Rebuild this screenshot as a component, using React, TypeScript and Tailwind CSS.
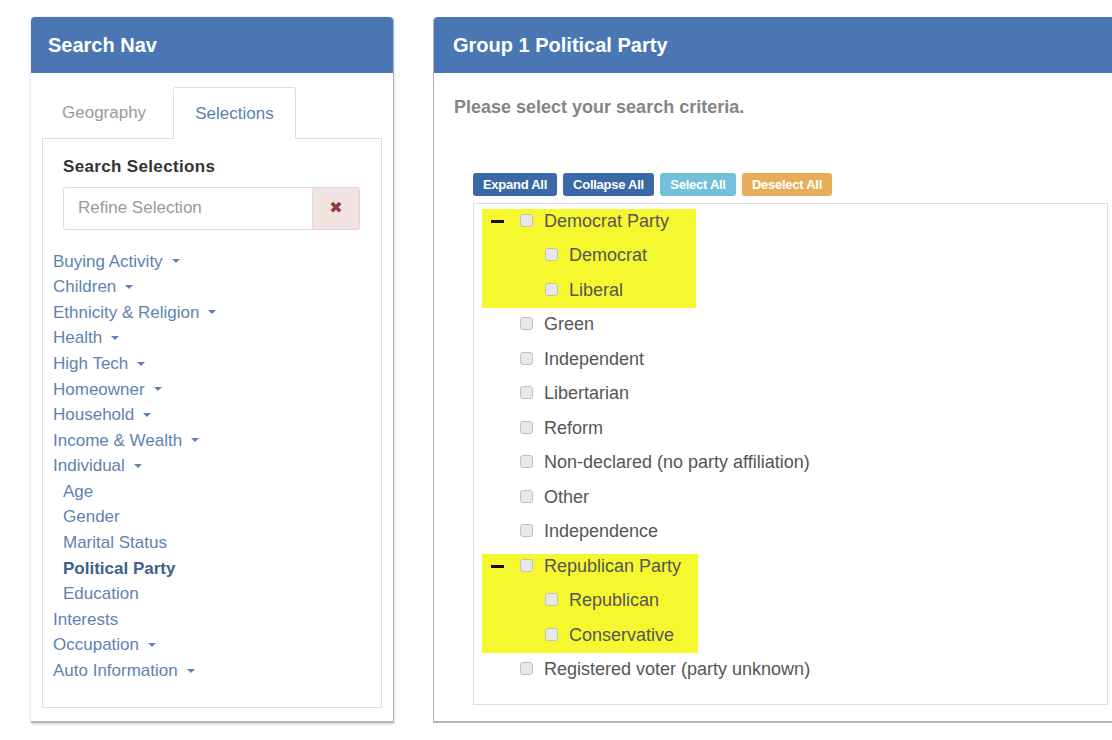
const NAV_ITEMS: { label: string; caret?: boolean; sub?: boolean; active?: boolean }[] = [
  { label: 'Buying Activity', caret: true },
  { label: 'Children', caret: true },
  { label: 'Ethnicity & Religion', caret: true },
  { label: 'Health', caret: true },
  { label: 'High Tech', caret: true },
  { label: 'Homeowner', caret: true },
  { label: 'Household', caret: true },
  { label: 'Income & Wealth', caret: true },
  { label: 'Individual', caret: true },
  { label: 'Age', sub: true },
  { label: 'Gender', sub: true },
  { label: 'Marital Status', sub: true },
  { label: 'Political Party', sub: true, active: true },
  { label: 'Education', sub: true },
  { label: 'Interests' },
  { label: 'Occupation', caret: true },
  { label: 'Auto Information', caret: true },
]

const FONT = { fontFamily: '"Liberation Sans", Arial, sans-serif' }

function Caret() {
  return (
    <span className="ml-[9px] inline-block h-0 w-0 border-x-[4px] border-t-[4px] border-x-transparent border-t-current align-middle" />
  )
}

function Checkbox() {
  return <span className="h-[13px] w-[13px] shrink-0 -translate-y-px rounded-[3px] border border-[#c0c0c0] bg-[#e8e8e8]" />
}

function Row({ label, level, parent, inset = 0 }: { label: string; level: 0 | 1; parent?: boolean; inset?: number }) {
  const pad = level === 0 ? 46 - inset : 71 - inset
  return (
    <div className="flex h-[34.5px] items-center" style={{ paddingLeft: parent ? 17 - inset : pad }}>
      {parent && <span className="mr-[16px] h-[3px] w-[13px] bg-[#111]" />}
      <Checkbox />
      <span className="ml-[11px] whitespace-nowrap text-[18px] text-[#555]">{label}</span>
    </div>
  )
}

function Group({ parent, kids, width }: { parent: string; kids: string[]; width: string }) {
  return (
    <div className={`ml-[8px] bg-[linear-gradient(to_bottom,transparent_5px,#f5f82e_5px)] ${width}`}>
      <Row label={parent} level={0} parent inset={8} />
      {kids.map((k) => (
        <Row key={k} label={k} level={1} inset={8} />
      ))}
    </div>
  )
}

export default function App() {
  return (
    <div className="flex h-[740px] w-[1112px] gap-[39px] overflow-hidden bg-white pl-[31px] pt-[17px]" style={FONT}>
      {/* left: search nav */}
      <div className="flex h-[706px] w-[363px] shrink-0 flex-col rounded-t-[4px] border-r border-b-2 border-[#adb6c3] shadow-[0_1px_3px_rgba(0,0,0,0.2)]">
        <div className="flex h-[56px] items-center rounded-t-[4px] bg-[#4a77b4] px-[17px] text-[20px] font-bold text-white">
          Search Nav
        </div>
        <div className="flex flex-1 flex-col px-[11px] pb-[13px] pt-[14px]">
          <div className="flex h-[51px] items-stretch">
            <div className="flex w-[131px] items-center pl-[20px] text-[17px] text-[#999]">Geography</div>
            <div className="relative z-10 -mb-px flex w-[123px] items-center justify-center rounded-t-[3px] border border-b-0 border-[#ddd] bg-white text-[17px] text-[#5b7fae]">
              Selections
            </div>
          </div>
          <div className="flex flex-1 flex-col border border-[#ddd] pl-[10px] pt-[15px]">
            <div className="ml-[10px] text-[17px] font-bold tracking-[0.02em] text-[#333]">Search Selections</div>
            <div className="ml-[10px] mt-[7px] flex h-[43px] w-[297px]">
              <div className="flex flex-1 items-center rounded-l-[3px] border border-[#ddd] pl-[14px] text-[17px] text-[#9a9a9a]">
                Refine Selection
              </div>
              <div className="flex w-[47px] items-center justify-center rounded-r-[3px] border border-l-0 border-[#e6d3d3] bg-[#f2e2e2] text-[16px] text-[#8b3b3b]" style={{ fontFamily: '"DejaVu Sans", sans-serif' }}>
                ✖
              </div>
            </div>
            <div className="mt-[19px] flex flex-col">
              {NAV_ITEMS.map((it) => (
                <div
                  key={it.label}
                  className={`flex h-[25.6px] items-center text-[17px] ${it.sub ? 'pl-[10px]' : ''} ${
                    it.active ? 'font-bold text-[#41608a]' : 'text-[#6182b0]'
                  }`}
                >
                  {it.label}
                  {it.caret && <Caret />}
                </div>
              ))}
            </div>
          </div>
        </div>
      </div>

      {/* right: group panel */}
      <div className="flex h-[706px] w-[720px] shrink-0 flex-col rounded-t-[4px] border-b-2 border-l border-[#adb6c3]">
        <div className="flex h-[56px] items-center rounded-t-[4px] bg-[#4a77b4] px-[19px] text-[20px] font-bold text-white">
          Group 1 Political Party
        </div>
        <div className="flex flex-col pl-[39px]">
          <div className="-ml-[19px] mt-[21px] text-[18px] font-bold text-[#858585]">Please select your search criteria.</div>
          <div className="mt-[52px] flex gap-[6px] text-[13px] font-bold tracking-[-0.02em] text-white">
            <div className="flex h-[23px] w-[84px] items-center justify-center rounded-[3px] bg-[#3b69a5]">Expand All</div>
            <div className="flex h-[23px] w-[91px] items-center justify-center rounded-[3px] bg-[#3b69a5]">Collapse All</div>
            <div className="flex h-[23px] w-[76px] items-center justify-center rounded-[3px] bg-[#72c0da]">Select All</div>
            <div className="flex h-[23px] w-[90px] items-center justify-center rounded-[3px] bg-[#e7ae5a]">Deselect All</div>
          </div>
          <div className="mt-[7px] w-[635px] border border-[#dcdcdc] pb-[17px]">
            <Group parent="Democrat Party" kids={['Democrat', 'Liberal']} width="w-[214px]" />
            <Row label="Green" level={0} />
            <Row label="Independent" level={0} />
            <Row label="Libertarian" level={0} />
            <Row label="Reform" level={0} />
            <Row label="Non-declared (no party affiliation)" level={0} />
            <Row label="Other" level={0} />
            <Row label="Independence" level={0} />
            <Group parent="Republican Party" kids={['Republican', 'Conservative']} width="w-[216px]" />
            <Row label="Registered voter (party unknown)" level={0} />
          </div>
        </div>
      </div>
    </div>
  )
}
